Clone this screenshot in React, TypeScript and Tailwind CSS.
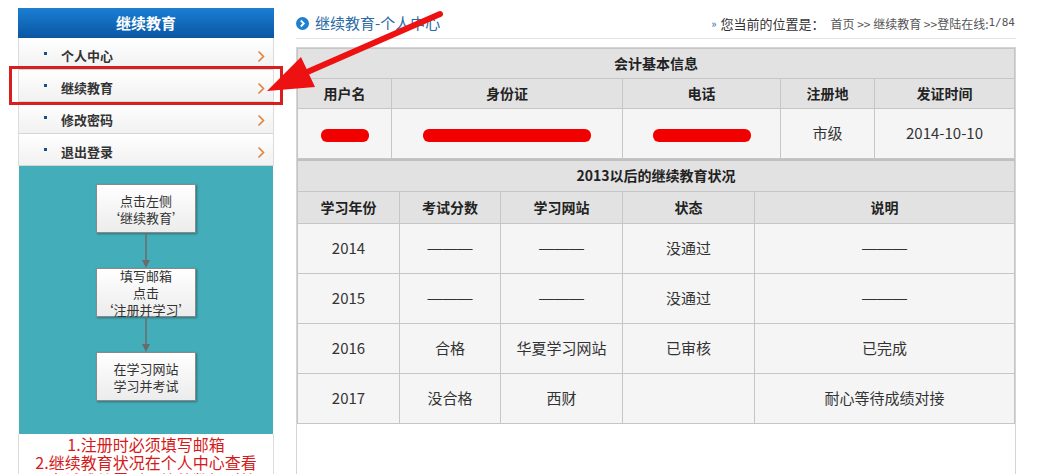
import React from 'react';

const font = { fontFamily: '"Noto Sans CJK SC", "Noto Sans", sans-serif' };

const menu = ['个人中心', '继续教育', '修改密码', '退出登录'];

const Chevron = () => (
    <svg width="8" height="13" viewBox="0 0 8 13" className="shrink-0">
        <path d="M1.5 1.5 L6.5 6.5 L1.5 11.5" fill="none" stroke="#e2813a" strokeWidth="1.6" />
    </svg>
);

const FlowBox = ({ lines }: { lines: string[] }) => (
    <div className="w-[100px] h-[49px] flex flex-col items-center justify-center border border-[#8a8a8a] bg-gradient-to-b from-white to-[#ececec] shadow-[1px_1px_2px_rgba(0,0,0,0.35)] text-[13px] leading-[17px] text-[#333]">
        {lines.map((l) => (
            <div key={l}>{l}</div>
        ))}
    </div>
);

const FlowArrow = () => (
    <svg width="10" height="35" viewBox="0 0 10 35">
        <line x1="5" y1="0" x2="5" y2="28" stroke="#6b6b6b" strokeWidth="1.5" />
        <path d="M1 27 L9 27 L5 35 Z" fill="#6b6b6b" />
    </svg>
);

const Redact = ({ w }: { w: number }) => (
    <span className="inline-block h-[13px] bg-[#f20000] rounded-[6px] align-middle" style={{ width: w }} />
);

const Sidebar = () => (
    <div className="w-[256px] shrink-0 flex flex-col">
        <div className="h-[30px] flex items-center justify-center bg-gradient-to-b from-[#1b7fd3] to-[#0a56a3] text-white text-[15px] font-bold">
            继续教育
        </div>
        <div className="border-x border-[#dcdcdc]">
            {menu.map((m) => (
                <div
                    key={m}
                    className="h-[32px] flex items-center pt-[5px] pl-[25px] pr-[8px] border-b border-[#d6d6d6] bg-gradient-to-b from-white to-[#f1f1f1]"
                >
                    <span className="w-[3px] h-[3px] bg-[#1d4f7a] mr-[14px] -mt-[6px]" />
                    <span className="flex-1 text-[13px] font-bold text-[#333]">{m}</span>
                    <Chevron />
                </div>
            ))}
        </div>
        <div className="h-[268px] bg-[#43adb9] flex flex-col items-center pt-[18px] ml-px mr-px">
            <FlowBox lines={['点击左侧', '‘继续教育’']} />
            <FlowArrow />
            <FlowBox lines={['填写邮箱', '点击', '‘注册并学习’']} />
            <FlowArrow />
            <FlowBox lines={['在学习网站', '学习并考试']} />
        </div>
        <div className="border-x border-[#dcdcdc] text-center text-[#d41b1b] text-[16px] leading-[18px] pt-px">
            <div>1.注册时必须填写邮箱</div>
            <div>2.继续教育状况在个人中心查看</div>
            <div>3.考试成绩需耐心等待数据对接</div>
        </div>
    </div>
);

const th = 'border border-[#c6c6c6] bg-[#e2e2e2] font-bold text-[14px] text-[#222] text-center';
const td = 'border border-[#c6c6c6] bg-[#f5f5f5] text-[15px] text-[#333] text-center';
const DASH = '———';

const rows = [
    ['2014', DASH, DASH, '没通过', DASH],
    ['2015', DASH, DASH, '没通过', DASH],
    ['2016', '合格', '华夏学习网站', '已审核', '已完成'],
    ['2017', '没合格', '西财', '', '耐心等待成绩对接'],
];

const Main = () => (
    <div className="w-[720px] shrink-0 flex flex-col">
        <div className="h-[31px] flex items-center justify-between border-b border-[#e3e3e3] pt-[1px]">
            <div className="flex items-center">
                <svg width="13" height="13" viewBox="0 0 13 13" className="mr-[6px]">
                    <circle cx="6.5" cy="6.5" r="6.5" fill="#1f7fd0" />
                    <path d="M4.8 3.5 L7.8 6.5 L4.8 9.5" fill="none" stroke="#fff" strokeWidth="1.8" />
                </svg>
                <span className="text-[15px] text-[#2a6aa5]">继续教育-个人中心</span>
            </div>
            <div className="flex items-center text-[12px] text-[#333] pr-px">
                <span className="text-[#2a6aa5] text-[11px] mr-[4px]">»</span>
                <span className="text-[13px]">您当前的位置是：</span>
                <span className="ml-[6px] text-[#555]">首页 &gt;&gt; 继续教育 &gt;&gt;登陆在线:</span>
                <span className="text-[#555]" style={{ fontFamily: '"DejaVu Sans Mono", monospace', fontSize: 11 }}>1/84</span>
            </div>
        </div>
        <div className="mt-[8px] border border-[#d4d4d4] h-[440px]">
            <table className="w-full border-collapse table-fixed">
                <colgroup>
                    <col className="w-[94px]" />
                    <col className="w-[231px]" />
                    <col className="w-[158px]" />
                    <col className="w-[94px]" />
                    <col />
                </colgroup>
                <tbody>
                    <tr className="h-[30px]">
                        <td colSpan={5} className={th}>会计基本信息</td>
                    </tr>
                    <tr className="h-[30px]">
                        <td className={th}>用户名</td>
                        <td className={th}>身份证</td>
                        <td className={th}>电话</td>
                        <td className={th}>注册地</td>
                        <td className={th}>发证时间</td>
                    </tr>
                    <tr className="h-[50px]">
                        <td className={td}><Redact w={48} /></td>
                        <td className={td}><Redact w={168} /></td>
                        <td className={td}><Redact w={98} /></td>
                        <td className={td}>市级</td>
                        <td className={td}>2014-10-10</td>
                    </tr>
                </tbody>
            </table>
            <table className="w-full border-collapse table-fixed border-t-2 border-[#c0c0c0]">
                <colgroup>
                    <col className="w-[102px]" />
                    <col className="w-[101px]" />
                    <col className="w-[122px]" />
                    <col className="w-[132px]" />
                    <col />
                </colgroup>
                <tbody>
                    <tr className="h-[31px]">
                        <td colSpan={5} className={th}>2013以后的继续教育状况</td>
                    </tr>
                    <tr className="h-[32px]">
                        <td className={th}>学习年份</td>
                        <td className={th}>考试分数</td>
                        <td className={th}>学习网站</td>
                        <td className={th}>状态</td>
                        <td className={th}>说明</td>
                    </tr>
                    {rows.map((r) => (
                        <tr key={r[0]} className="h-[50px]">
                            {r.map((c, i) => (
                                <td
                                    key={i}
                                    className={td}
                                    style={c === DASH ? { fontFamily: '"Liberation Sans", sans-serif' } : undefined}
                                >
                                    {c}
                                </td>
                            ))}
                        </tr>
                    ))}
                </tbody>
            </table>
        </div>
    </div>
);

export default function App() {
    return (
        <div className="relative w-[1037px] h-[474px] overflow-hidden bg-white" style={font}>
            <div className="flex gap-[22px] pl-[18px] pt-[8px]">
                <Sidebar />
                <Main />
            </div>
            {/* annotation: red frame + arrow */}
            <div className="absolute left-[9px] top-[66px] w-[274px] h-[39px] border-[3px] border-[#d81e1e] pointer-events-none" />
            <svg className="absolute left-0 top-0 pointer-events-none" width="1037" height="474">
                <line x1="440" y1="14" x2="305" y2="73" stroke="#ee1111" strokeWidth="6" strokeLinecap="round" />
                <path d="M267 91 L301 57 L315 87 Z" fill="#ee1111" />
            </svg>
        </div>
    );
}
